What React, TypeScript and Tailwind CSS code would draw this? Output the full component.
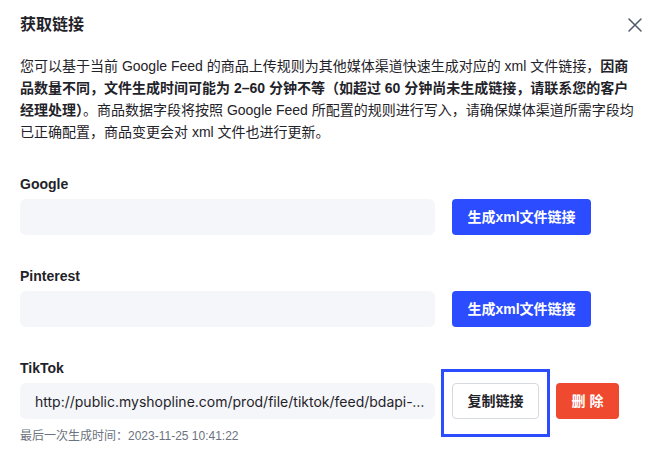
const FONT = '"Liberation Sans", "Noto Sans CJK SC", sans-serif'

function CloseIcon() {
  return (
    <svg width="14" height="14" viewBox="0 0 14 14" className="mr-[3px]">
      <path d="M1 1L13 13M13 1L1 13" stroke="#4e5969" strokeWidth="1.5" strokeLinecap="round" />
    </svg>
  )
}

function FeedRow({
  label,
  value,
  children,
}: {
  label: string
  value?: string
  children: React.ReactNode
}) {
  return (
    <div className="mt-[31px]">
      <div className="text-[14px] leading-[20px] font-semibold text-[#1f2329]">{label}</div>
      <div className="mt-[5px] flex items-center gap-[17px]">
        <div className="w-[415px] h-[36px] rounded-[6px] bg-[#f5f6f9] flex items-center pl-[15px] pr-[10px] min-w-0">
          {value && (
            <span className="truncate text-[14px] text-[#1f2329] font-['Inter',sans-serif]">{value}</span>
          )}
        </div>
        {children}
      </div>
    </div>
  )
}

function GenerateButton() {
  return (
    <button className="w-[139px] h-[36px] rounded-[4px] bg-[#2b4cff] text-white text-[14px] font-semibold flex items-center justify-center">
      生成xml文件链接
    </button>
  )
}

export default function App() {
  return (
    <div className="w-[667px] h-[470px] bg-white overflow-hidden" style={{ fontFamily: FONT }}>
      <div className="pl-[20px] pr-[22px]">
        {/* Header */}
        <div className="mt-[13px] h-[24px] flex items-center justify-between">
          <h1 className="text-[16px] leading-[24px] font-bold text-[#1f2329]">获取链接</h1>
          <CloseIcon />
        </div>

        {/* Description */}
        <p className="mt-[18px] text-[14px] leading-[22px] text-[#1f2329] whitespace-nowrap">
          您可以基于当前 Google Feed 的商品上传规则为其他媒体渠道快速生成对应的 xml 文件链接，
          <b className="font-semibold">
            因商
            <br />
            品数量不同，文件生成时间可能为 2–60 分钟不等（如超过 60 分钟尚未生成链接，请联系您的客户
            <br />
            经理处理）
          </b>
          。商品数据字段将按照 Google Feed 所配置的规则进行写入，请确保媒体渠道所需字段均
          <br />
          已正确配置，商品变更会对 xml 文件也进行更新。
        </p>

        <FeedRow label="Google">
          <GenerateButton />
        </FeedRow>

        <FeedRow label="Pinterest">
          <GenerateButton />
        </FeedRow>

        <FeedRow
          label="TikTok"
          value="http://public.myshopline.com/prod/file/tiktok/feed/bdapi-20231125104122-tiktok.xml"
        >
          <div className="relative">
            <button className="w-[87px] h-[36px] rounded-[4px] bg-white border border-[#d5d9e0] text-[14px] font-semibold text-[#1f2329] flex items-center justify-center">
              复制链接
            </button>
            <div className="absolute left-[-11px] right-[-11px] top-[-14px] bottom-[-18px] border-[3px] border-[#2b4cff] pointer-events-none" />
          </div>
          <button className="w-[63px] h-[36px] rounded-[4px] bg-[#ef4a30] text-white text-[14px] font-semibold flex items-center justify-center">
            删 除
          </button>
        </FeedRow>

        <div className="mt-[8px] text-[12px] leading-[18px] text-[#6b7280]">
          最后一次生成时间：2023-11-25 10:41:22
        </div>
      </div>
    </div>
  )
}
